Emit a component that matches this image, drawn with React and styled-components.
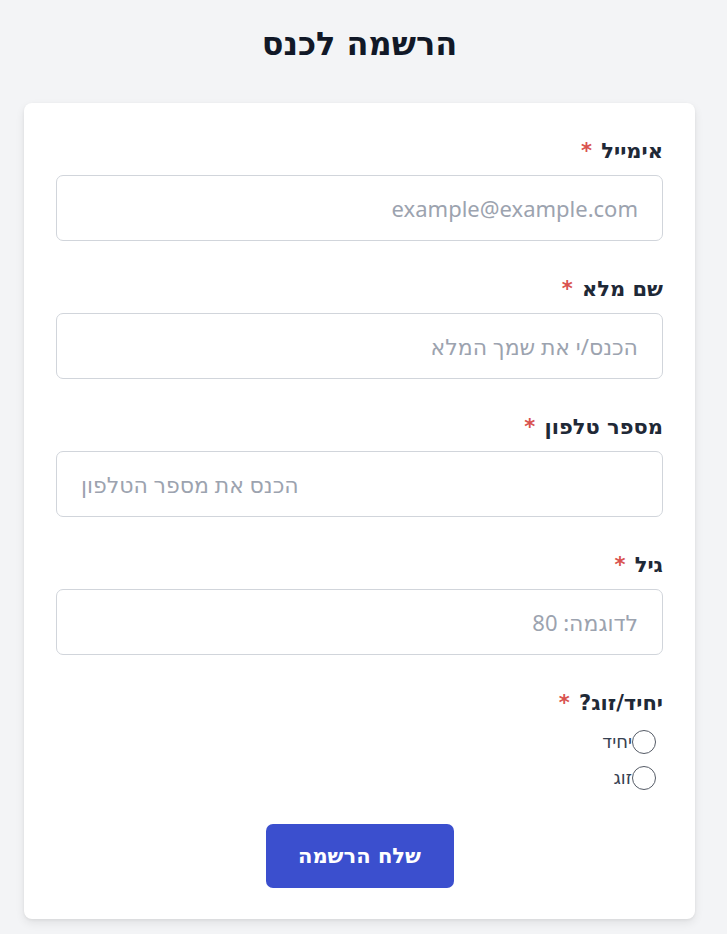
import React from 'react'
import styled, { createGlobalStyle } from 'styled-components'

const GlobalStyle = createGlobalStyle`
	* {
		box-sizing: border-box;
	}
	body {
		margin: 0;
		background: #f3f4f6;
		font-family: 'Noto Sans', 'DejaVu Sans', sans-serif;
		color: #1f2937;
	}
`

const fields = [
	{ id: 'email', label: 'אימייל', type: 'email', placeholder: 'example@example.com' },
	{ id: 'name', label: 'שם מלא', type: 'text', placeholder: 'הכנס/י את שמך המלא' },
	{ id: 'phone', label: 'מספר טלפון', type: 'tel', placeholder: 'הכנס את מספר הטלפון', left: true },
	{ id: 'age', label: 'גיל', type: 'text', placeholder: 'לדוגמה: 80' },
]

const App = () => {
	return (
		<Page dir="rtl">
			<GlobalStyle />
			<Title>הרשמה לכנס</Title>

			<Card onSubmit={(e) => e.preventDefault()}>
				{fields.map((f) => (
					<Field key={f.id}>
						<Label htmlFor={f.id}>
							{f.label} <Star>*</Star>
						</Label>
						<Input id={f.id} type={f.type} placeholder={f.placeholder} $left={f.left} />
					</Field>
				))}

				<Field>
					<Label as="span">
						יחיד/זוג? <Star>*</Star>
					</Label>
					<Options>
						<Option>
							<Radio type="radio" name="kind" />
							יחיד
						</Option>
						<Option>
							<Radio type="radio" name="kind" />
							זוג
						</Option>
					</Options>
				</Field>

				<Submit type="submit">שלח הרשמה</Submit>
			</Card>
		</Page>
	)
}

export default App

const Page = styled.div`
	padding: 24px 32px 16px 24px;
	display: flex;
	flex-direction: column;
	align-items: stretch;
`

const Title = styled.h1`
	margin: 0 0 39px;
	text-align: center;
	font-family: 'DejaVu Sans', sans-serif;
	font-size: 32px;
	font-weight: 700;
	line-height: 40px;
	color: #111827;
`

const Card = styled.form`
	background: #fff;
	border-radius: 8px;
	box-shadow: 0 4px 10px rgba(0, 0, 0, 0.08), 0 1px 3px rgba(0, 0, 0, 0.06);
	padding: 32px 32px 31px;
	display: flex;
	flex-direction: column;
`

const Field = styled.div`
	display: flex;
	flex-direction: column;
	gap: 8px;
	margin-bottom: 32px;
`

const Label = styled.label`
	font-family: 'DejaVu Sans', sans-serif;
	font-size: 21px;
	font-weight: 700;
	line-height: 32px;
	color: #1f2937;
`

const Star = styled.span`
	color: #d9534f;
	margin-right: 2px;
`

const Input = styled.input`
	height: 66px;
	width: 100%;
	border: 1px solid #d1d5db;
	border-radius: 7px;
	padding: 0 24px;
	font-family: inherit;
	font-size: 22px;
	color: #1f2937;
	background: #fff;
	text-align: ${(p) => (p.$left ? 'left' : 'right')};
	outline: none;

	&::placeholder {
		color: #9ca3af;
	}
`

const Options = styled.div`
	display: flex;
	flex-direction: column;
	gap: 12px;
	padding-right: 7px;
	margin-top: 3px;
`

const Option = styled.label`
	display: flex;
	align-items: center;
	font-family: 'DejaVu Sans', sans-serif;
	font-size: 18px;
	color: #374151;
	line-height: 24px;
`

const Radio = styled.input`
	appearance: none;
	margin: 0;
	width: 24px;
	height: 24px;
	border: 1px solid #555b66;
	border-radius: 50%;
	background: #fff;
`

const Submit = styled.button`
	align-self: center;
	width: 188px;
	height: 64px;
	margin-top: 2px;
	border: none;
	border-radius: 7px;
	background: #3b4fce;
	color: #fff;
	font-family: 'DejaVu Sans', sans-serif;
	font-size: 21px;
	font-weight: 700;
	cursor: pointer;
`
